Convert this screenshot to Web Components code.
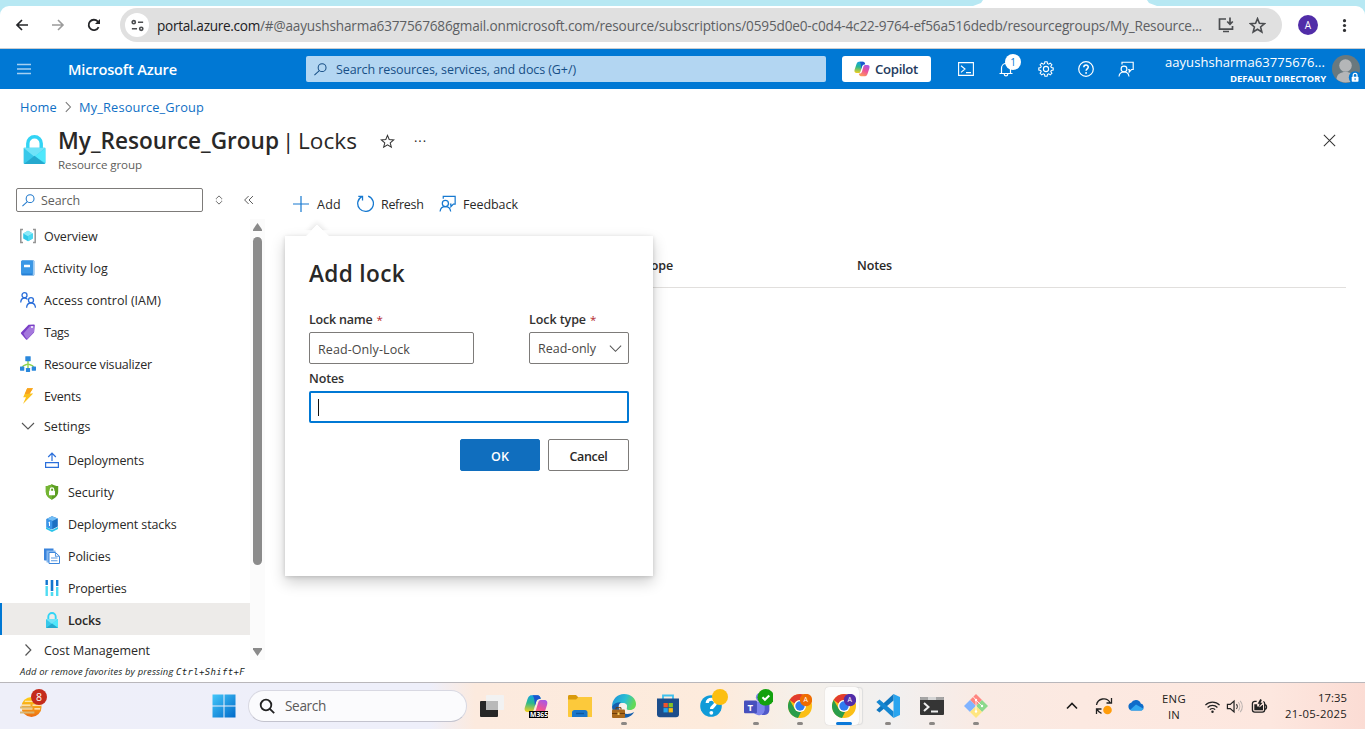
<!DOCTYPE html>
<html lang="en">
<head>
<meta charset="utf-8">
<title>My_Resource_Group - Locks</title>
<style>
html,body{margin:0;padding:0;height:729px;overflow:hidden;background:#fff}
body{font-family:"Open Sans","Noto Sans",sans-serif;font-size:12.5px;color:#292827}
</style>
</head>
<body>
<portal-screen></portal-screen>
<script>
const make=(name,css,html)=>{
  const t=document.createElement('template');
  t.innerHTML='<style>*{box-sizing:border-box}'+css+'</style>'+html;
  customElements.define(name,class extends HTMLElement{
    constructor(){super();this.attachShadow({mode:'open'}).append(t.content.cloneNode(true))}
  });
};

/* Single line of text tracked to an exact measure given by the w attribute; --dy drops its baseline. */
customElements.define('ui-text',class extends HTMLElement{
  constructor(){
    super();
    this.attachShadow({mode:'open'}).innerHTML='<style>:host{display:block;white-space:pre;flex:none;line-height:20px}span{display:inline-block;padding-top:var(--dy,1px);margin-bottom:calc(0px - var(--dy,1px));vertical-align:top}</style><span><slot></slot></span>';
  }
  connectedCallback(){
    const w=parseFloat(this.getAttribute('w'));
    if(!w)return;
    const s=this.shadowRoot.querySelector('span');
    const n=this.textContent.length;
    s.style.letterSpacing='0px';
    s.style.letterSpacing=((w-s.getBoundingClientRect().width)/n).toFixed(4)+'px';
    this.style.width=w+'px';
  }
});

const person='<circle cx="6" cy="8" r="2.9"/><path d="M1 15.500c.3-3 2.400-4.500 5-4.500s4.600 1.500 5 4.500M4 3.500V1.200h11.200v7.300h-1.700L11.200 11V8.500h-1"/>';
const lockArt='<path d="M4.300 7.500V4.700a3.700 3.700 0 0 1 7.400 0v2.800" fill="none" stroke="#32d4f5" stroke-width="1.900"/><rect x="2" y="7" width="12" height="9" rx=".5" fill="#37c8ea"/><path d="M2 7.200 8 12l6-4.800V7H2z" fill="#6fe3f8"/><path d="M14 7.300V15.500L8 11.800z" fill="#4fe8fc"/><path d="M2.200 16 8 11.500l5.800 4.500z" fill="#25a9ce"/>';
const chromeArt='<circle cx="12" cy="12" r="12" fill="#fbbf16"/><path d="M12 0a12 12 0 0 1 10.400 6H12a6 6 0 0 0-5.400 3.500L1.600 6A12 12 0 0 1 12 0z" fill="#e23b2e"/><path d="M1.600 6 7 15.200A6 6 0 0 0 13 18l-3 5.900A12 12 0 0 1 1.600 6z" fill="#2a9d4b"/><circle cx="12" cy="12" r="6" fill="#fff"/><circle cx="12" cy="12" r="4.700" fill="#2f7cf0"/>';
const copilot='<defs><linearGradient id="a" x1=".3" y1="0" x2=".2" y2="1"><stop offset="0" stop-color="#14a3e0"/><stop offset=".45" stop-color="#2bb98d"/><stop offset="1" stop-color="#f7cf1d"/></linearGradient><linearGradient id="b" x1=".8" y1="0" x2=".3" y2="1"><stop offset="0" stop-color="#a657e8"/><stop offset=".5" stop-color="#ee5396"/><stop offset="1" stop-color="#fd9a5b"/></linearGradient></defs><path d="M11.200 3.200C10.800 1.700 10.200.8 9 .8H5C3.300.8 2.700 2.300 2 4.500L.6 8.800c-.6 2 .2 3.200 2 3.200h2.200c1 0 1.500-.8 1.800-1.800l1.500-5c.4-1.300 1.100-2 3.100-2z" fill="url(#a)"/><path d="M4.800 12.800c.4 1.500 1 2.400 2.200 2.400h4c1.700 0 2.300-1.500 3-3.700l1.400-4.300c.6-2-.2-3.200-2-3.200h-2.200c-1 0-1.500.8-1.800 1.800l-1.500 5c-.4 1.300-1.100 2-3.100 2z" fill="url(#b)"/><path d="M5.500.8H9c1.200 0 1.800.9 2.200 2.400-1.700 0-2.600.6-3 1.800L7.300 8C7 4 6.700 1.500 5.500.8z" fill="#1c55cf"/>';
const ICONS={
back:[16,'<path d="M14 8H3M8 3 3 8l5 5" fill="none" stroke="currentColor" stroke-width="1.700"/>'],
fwd:[16,'<path d="M2 8h11M8 3l5 5-5 5" fill="none" stroke="currentColor" stroke-width="1.600"/>'],
reload:[16,'<path d="M12.600 10.200A5.200 5.200 0 1 1 11.700 4.400L13.500 6" fill="none" stroke="currentColor" stroke-width="1.800"/><path d="M14 2v5H9z" fill="currentColor"/>'],
tune:[16,'<g fill="none" stroke="currentColor" stroke-width="1.700"><circle cx="4" cy="4.500" r="1.700"/><path d="M8.500 4.500H14M2 11.500h5.500"/><circle cx="12" cy="11.500" r="1.700"/></g>'],
install:[18,'<path d="M9 3H2.500v10.200h13V10M6 15.500h6" fill="none" stroke="currentColor" stroke-width="1.700"/><path d="M13 1.500v6M10.200 5.500 13 8.200l2.800-2.700" fill="none" stroke="currentColor" stroke-width="1.700"/>'],
star:[16,'<path d="m8 1.500 1.800 4.400 4.800.4-3.700 3.100 1.200 4.700L8 11.500l-4.100 2.600 1.200-4.700L1.400 6.300l4.800-.4z" fill="none" stroke="currentColor" stroke-width="var(--sw,1.4)"/>'],
kebab:[16,'<g fill="currentColor"><circle cx="8" cy="2.800" r="1.700"/><circle cx="8" cy="8" r="1.700"/><circle cx="8" cy="13.200" r="1.700"/></g>'],
menu:[16,'<path d="M1 3.500h14M1 8h14M1 12.500h14" stroke="currentColor" stroke-width="1.300"/>'],
mag:[16,'<g fill="none" stroke="currentColor" stroke-width="1.100"><circle cx="9.700" cy="6" r="4.200"/><path d="M6.700 9.200 1.500 14"/></g>'],
magw:[16,'<g fill="none" stroke="currentColor" stroke-width="1.800"><circle cx="7" cy="7" r="5.300"/><path d="m10.800 10.800 4.400 4.400"/></g>'],
copilot:[16,copilot],
shell:[16,'<path d="M.6 1.600h14.800v12.800H.6zM3 4.800l4 3.200-4 3.300M8 11.600h5" fill="none" stroke="currentColor" stroke-width="1.100"/>'],
bell:[16,'<path d="M1.500 12.500h13M3.500 12.500V7a4.500 4.500 0 0 1 9 0v5.500M6.200 13c.2 2.600 3.400 2.600 3.600 0" fill="none" stroke="currentColor" stroke-width="1.200"/>'],
gear:[16,'<g fill="none" stroke="currentColor"><circle cx="8" cy="8" r="2.600" stroke-width="1.100"/><path d="M6.900.8h2.200l.4 1.900 1.200.5 1.600-1.100 1.600 1.600-1.100 1.600.5 1.200 1.900.4v2.200l-1.900.4-.5 1.200 1.100 1.600-1.600 1.600-1.600-1.100-1.200.5-.4 1.900H6.900l-.4-1.900-1.200-.5-1.600 1.100-1.600-1.600 1.100-1.600-.5-1.200L.8 9.100V6.900l1.900-.4.5-1.200-1.100-1.600 1.600-1.600 1.600 1.100 1.200-.5z" stroke-width="1.100"/></g>'],
help:[16,'<g fill="none" stroke="currentColor" stroke-width="1.200"><circle cx="8" cy="8" r="7.300"/><path d="M5.800 6.300c0-2.900 4.500-2.900 4.500-.2 0 1.700-2.200 1.900-2.200 3.700" stroke-width="1.500"/></g><circle cx="8.100" cy="11.900" r=".95" fill="currentColor"/>'],
feedback:[16,'<g fill="none" stroke="currentColor" stroke-width="1.150">'+person+'</g>'],
avatar:[28,'<circle cx="14" cy="14" r="14" fill="#69797e"/><circle cx="13.500" cy="10.500" r="6.300" fill="#b4b6b8"/><path d="M4.500 24c.5-5 4-7 9-7s8.500 2 9 7.500a14 14 0 0 1-18-.5z" fill="#b4b6b8"/><circle cx="23" cy="22.500" r="6.200" fill="#0078d4"/><rect x="19.700" y="21.800" width="6.800" height="5" rx=".7" fill="#fff"/><path d="M21.200 22v-1.700a1.900 1.900 0 0 1 3.800 0V22" fill="none" stroke="#fff" stroke-width="1.200"/><rect x="22.600" y="23.200" width="1" height="2" fill="#0078d4"/>'],
chevR:[16,'<path d="m5.500 2.500 5.300 5.500-5.300 5.500" fill="none" stroke="currentColor" stroke-width="1.200"/>'],
chevD:[16,'<path d="m2 5 6 6 6-6" fill="none" stroke="currentColor" stroke-width="1.100"/>'],
chevU:[16,'<path d="m3 10.500 5-5 5 5" fill="none" stroke="currentColor" stroke-width="1.600"/>'],
close:[16,'<path d="m2 2 12 12M14 2 2 14" stroke="currentColor" stroke-width="1.100"/>'],
updown:[16,'<path d="M4.500 6 8 2.500 11.500 6M4.500 10 8 13.500l3.500-3.500M4.500 6v1M11.500 6v1M4.500 10V9M11.500 10V9" fill="none" stroke="currentColor" stroke-width="1.300"/>'],
dbl:[16,'<path d="M7.500 3.500 3 8l4.500 4.500M12.500 3.500 8 8l4.500 4.500" fill="none" stroke="currentColor" stroke-width="1.100"/>'],
plus:[16,'<path d="M8 0v16M0 8h16" stroke="currentColor" stroke-width="1.200"/>'],
refresh:[16,'<path d="M10.500 1A7.400 7.400 0 1 1 4.500 1.500M1.200 1.300h4v3.900" fill="none" stroke="currentColor" stroke-width="1.200"/>'],
lock:[16,lockArt],
overview:[16,'<path d="M3 1.600H.8v12.800H3M13 1.600h2.200v12.800H13" fill="none" stroke="#949494" stroke-width="1.500"/><path d="m8 2.800 4.800 2.700v5L8 13.200l-4.800-2.700v-5z" fill="#32c8e8"/><path d="M8 2.800 12.800 5.500 8 8.200 3.200 5.500z" fill="#8be9f8"/><path d="M8 8.200v5l4.800-2.700v-5z" fill="#4bd9f2"/>'],
log:[16,'<path d="M2.500.4h11c.5 0 .8.300.8.800v13.600c0 .5-.3.800-.8.800h-11A1.300 1.300 0 0 1 1.200 14.300V1.700C1.200 1 1.700.4 2.500.4z" fill="#2680d6"/><path d="M12.700.4h.8c.5 0 .8.300.8.800v13.600c0 .5-.3.800-.8.800h-.8z" fill="#9ccaf2"/><path d="M2.500.4h10.200v13.200H2.500c-.5 0-1 .2-1.300.7V1.700C1.200 1 1.700.4 2.500.4z" fill="#3a97e6"/><rect x="4" y="4.700" width="6" height="2.600" rx=".3" fill="#fff"/>'],
people:[16,'<g fill="none" stroke="#2b6fda" stroke-width="1.300"><circle cx="4.500" cy="3.200" r="2.500"/><path d="M.7 10.500c.2-3 1.600-4.500 3.800-4.500 1.400 0 2.400.5 3 1.500"/><circle cx="11" cy="8.200" r="2.500"/><path d="M6.600 15.800c.2-3.300 1.800-4.800 4.400-4.800s4.200 1.500 4.500 4.800"/></g>'],
tag:[16,'<path d="M8.500.8 14 .4c.5 0 .8.400.8.800L14 8.500 7.300 15.400c-.4.400-.9.400-1.300 0L1.100 9.800c-.4-.4-.3-.9 0-1.200z" fill="#7a3fc6"/><path d="M10 2h4.200v5.800L7.300 15C6.200 14.200 4.500 12 3.500 9.500z" fill="#a478dc"/><circle cx="12" cy="3" r="1" fill="#fff"/>'],
viz:[16,'<path d="M8 5v7M8 7.500C8 9 3 8.500 2.500 11M8 7.500c0 1.500 5 1 5.500 3.500" fill="none" stroke="#92d34e" stroke-width="1.400"/><g fill="#2a88dc"><rect x="5.300" y=".2" width="5.400" height="5" rx=".4"/><rect x="0" y="10.500" width="4.300" height="4.200" rx=".4"/><rect x="5.900" y="12" width="4.200" height="4" rx=".4"/><rect x="11.700" y="10.500" width="4.300" height="4.200" rx=".4"/></g>'],
bolt:[16,'<path d="M7.200.2H13L9.700 5.500h3.500L3 16l3-6.800H3.200z" fill="#fbc21d"/><path d="M7.200.2H13L9.700 5.500 7 6 4.800 6z" fill="#f9a11e"/>'],
deploy:[16,'<path d="M1.600 10.600h12.800v4.800H1.600zM8 9V1.200M4.200 5 8 1l3.800 4" fill="none" stroke="#2a6fdb" stroke-width="1.200"/>'],
shield:[16,'<path d="M8 .2c2 1.400 4 1.700 6.200 1.700v5.600c0 4-2.900 6.500-6.200 8.300-3.300-1.800-6.200-4.300-6.200-8.300V1.900C4 1.900 6 1.600 8 .2z" fill="#5c9e22"/><path d="M8 .2v15.600C4.700 14 1.800 11.500 1.800 7.500V1.900C4 1.900 6 1.600 8 .2z" fill="#74b533"/><rect x="5" y="6.800" width="6" height="4.500" rx=".5" fill="#fff"/><path d="M6.300 7V5.500a1.700 1.700 0 0 1 3.400 0V7" fill="none" stroke="#fff" stroke-width="1.200"/>'],
stack:[16,'<path d="m2 11 6 3 6-3v2l-6 3-6-3z" fill="#2bc4ea"/><path d="M2.500 3 8 .2 13.800 2.500v8L8 13.500 2.500 11z" fill="#1b6fc2"/><path d="M2.500 3 8 .2l5.800 2.300L8.300 5z" fill="#71bdf6"/><path d="m2.500 3 5.800 2v8.300L2.500 11z" fill="#3a96ea"/><path d="M5.500 6v4M4.500 6.700l1-.7" stroke="#fff" stroke-width="1"/>'],
policy:[16,'<path d="M0 .5h9.500v3H3.500v9H.8C.3 12.500 0 12.200 0 11.700z" fill="#3a84dc"/><path d="M2.500 2.500h9v3h-6v9h-3z" fill="#83b7ef"/><path d="M5 4.500h6.500l4 3.800V15.500H5z" fill="#fff" stroke="#3c86db"/><path d="M11.500 4.500v3.800h4M7 10h6.500M7 12.700h6.500" fill="none" stroke="#5b9ae2" stroke-width="1.100"/>'],
props:[16,'<g><rect x="1.500" y="0" width="2.400" height="5" fill="#1276cf"/><rect x="1.500" y="6" width="2.400" height="10" fill="#50dcf2"/><rect x="6.700" y="0" width="2.600" height="11" fill="#1276cf"/><rect x="6.700" y="12" width="2.600" height="4" fill="#50dcf2"/><rect x="12" y="0" width="2.400" height="6" fill="#1276cf"/><rect x="12" y="7" width="2.400" height="9" fill="#50dcf2"/></g>'],
widget:[24,'<defs><linearGradient id="a" x2="0" y2="1"><stop stop-color="#ffd21a"/><stop offset="1" stop-color="#ec6b12"/></linearGradient></defs><circle cx="12" cy="12.500" r="10.500" fill="url(#a)"/><path d="M2 10.500h9m2 0h9M1 14.500h12m2 0h6M5 6.500h9" stroke="#fff3d5" stroke-width="1.200"/><path d="M0 13h13M0 18.200h15" stroke="#d9b774" stroke-width="2"/>'],
win:[24,'<defs><linearGradient id="a" gradientUnits="userSpaceOnUse" x1="0" y1="0" x2="24" y2="24"><stop stop-color="#45c9fb"/><stop offset="1" stop-color="#0068c8"/></linearGradient></defs><path d="M.5.500h11v11H.5zM12.500.500h11v11h-11zM.5 12.500h11v11H.5zM12.500 12.500h11v11h-11z" fill="url(#a)"/>'],
task:[24,'<rect x="0" y="7" width="18" height="16" rx="1" fill="#272727"/><rect x="6" y="1" width="18" height="15" rx="1" fill="#f2f2f2"/><path d="M6 7h12v9H6z" fill="#b9b9b9"/>'],
m365:[24,'<g transform="scale(1.5)">'+copilot+'</g>'],
folder:[24,'<path d="M0 2.500C0 1.500.5 1 1.500 1H8l2.500 2.500V6H0z" fill="#d99a0c"/><path d="M0 5.500h8l2.500-2.500H24v20H1c-.6 0-1-.4-1-1z" fill="#fcc93b"/><path d="M4 23v-4.500c0-1.500 1-2.500 2.500-2.500h10.500c1.500 0 2.500 1 2.500 2.500V23z" fill="#1a76c9"/><path d="M8 19.500h8" stroke="#0d57a0" stroke-width="1.400"/>'],
edge:[24,'<defs><linearGradient id="a" x2="1" y2=".3"><stop stop-color="#1c8fdc"/><stop offset=".6" stop-color="#2bbfd2"/><stop offset="1" stop-color="#63d957"/></linearGradient></defs><path d="M12 0c7 0 12 4.700 12 10 0 3.800-2.700 6-6 6-2.600 0-4-.9-3.300-2.300C16 10.500 13.500 9 10 9 5 9 1 12 .1 14 -.6 6 5 0 12 0z" fill="url(#a)"/><path d="M.1 13C1.500 9.500 5 8.300 9 8.300c-3 2-3 6.500-.5 9.200 3 3.200 9.500 3.200 13.700.5C18.500 25 8 26 3 19.500.8 17 0 15 .1 13z" fill="#145ead"/><path d="M10 9c-2.500 3-1.500 8 4 9.200 3 .7 6 .4 8.500-.9-4 1.700-9 .5-7.800-3.600C15.800 11 13.500 9 10 9z" fill="#f7f3ee"/><rect x="0" y="15.500" width="13" height="8.500" rx="1" fill="#a9681c"/><path d="M4 15.500v-1.800h5v1.800M0 19.500h13" fill="none" stroke="#6c3c0a" stroke-width="1"/><rect x="5.500" y="18.500" width="2" height="2.500" fill="#f9cf64"/>'],
store:[24,'<path d="M7 5V1.500h10V5" fill="none" stroke="#3fc1ee" stroke-width="1.800"/><path d="M1 4.500h22v15.700a3 3 0 0 1-3 3H4a3 3 0 0 1-3-3z" fill="#1c4e8c"/><path d="M7.500 9h4.300v4.300H7.500z" fill="#f0532b"/><path d="M12.600 9h4.300v4.300h-4.300z" fill="#84c225"/><path d="M7.500 14.100h4.300v4.300H7.500z" fill="#22a6ec"/><path d="M12.600 14.100h4.300v4.300h-4.300z" fill="#fdbb12"/>'],
qm:[28,'<circle cx="11" cy="17" r="10.800" fill="#109bd8"/><path d="M7.200 14c0-5 8.300-5 8.300 0 0 3-4 3.200-4 6" fill="none" stroke="#fff" stroke-width="3.200"/><circle cx="11.300" cy="23.800" r="1.900" fill="#fff"/><circle cx="20" cy="8" r="8" fill="#fcbf10"/>'],
teams:[28,'<circle cx="16" cy="8" r="4.500" fill="#7b83eb"/><path d="M17 12h7.500v8c0 3-2 5-4.500 5h-3z" fill="#5059c9"/><path d="M9 12h11v8.500a6 6 0 0 1-11 2z" fill="#7b83eb"/><rect x="0" y="11" width="12.500" height="12.500" rx="1" fill="#4750bd"/><circle cx="21" cy="8" r="8" fill="#13a10e"/><path d="m17.800 8 2.400 2.400 4.200-4.200" fill="none" stroke="#fff" stroke-width="2"/>'],
chromeO:[24,chromeArt+'<circle cx="18" cy="6" r="6.200" fill="#ef6c00"/>'],
chromeP:[24,chromeArt+'<circle cx="18" cy="6" r="6.200" fill="#512da8"/>'],
vscode:[24,'<path d="M17.500 0 24 3v18l-6.500 3z" fill="#2aa5ef"/><path d="M17.500 0v6.500L3.500 18.500.3 16z" fill="#0f76bf"/><path d="M17.500 24v-6.500L3.500 5.500.3 8z" fill="#1587d2"/>'],
term:[24,'<rect y="3" width="24" height="18" rx="1" fill="#353535"/><path d="M0 6V4c0-.6.400-1 1-1h22c.6 0 1 .4 1 1v2z" fill="#a5a5a5"/><path d="M8 3h8v3H8z" fill="#d5d5d5"/><path d="m4 9 4.500 4L4 17M11 17.500h7" fill="none" stroke="#eee" stroke-width="2"/>'],
git:[24,'<path d="M12 0 18 6l-6 6-6-6z" fill="#ff8580"/><path d="m6 6 6 6-6 6-6-6z" fill="#80b3ff"/><path d="m18 6 6 6-6 6-6-6z" fill="#8cd98c"/><path d="m12 12 6 6-6 6-6-6z" fill="#ffe680"/><path d="M9 2.500 12 6v12M12 6l6 6" fill="none" stroke="#fff" stroke-width=".8"/><circle cx="12" cy="6" r="1.200" fill="#fff"/><circle cx="12" cy="17.500" r="1.200" fill="#fff"/><circle cx="18" cy="12" r="1.200" fill="#fff"/>'],
sync:[18,'<path d="M1.500 8A7.300 7.300 0 0 1 15 5.500M16.500 1v5h-5M6.500 16.300A7 7 0 0 1 2 12M1.500 17v-5h5" fill="none" stroke="#222" stroke-width="1.300"/><circle cx="12.500" cy="13" r="4.300" fill="#ff9c0a"/>'],
cloud:[18,'<path d="M4.500 13.500a4 4 0 0 1-.3-7.700 5.300 5.300 0 0 1 9.600.7 3.700 3.700 0 0 1 .7 7z" fill="#0f6cc9"/><path d="m3 13 6-5.500 7.500 4.200c-.4 1.200-1.400 1.800-2.500 1.800H4.500z" fill="#32a9f0"/>'],
wifi:[18,'<g fill="none" stroke="#222" stroke-width="1.300"><path d="M1.500 7.500a10.500 10.500 0 0 1 15 0M3.800 10a7.300 7.300 0 0 1 10.400 0M6.200 12.300a4 4 0 0 1 5.600 0"/></g><circle cx="9" cy="14.500" r="1.300" fill="#222"/>'],
sound:[18,'<path d="M1.500 6.800h3L8.500 3.300v11.400L4.500 11.200h-3z" fill="none" stroke="#222" stroke-width="1.300"/><path d="M11 6.500a4 4 0 0 1 0 5" fill="none" stroke="#444" stroke-width="1.200"/><path d="M13 4.500a7 7 0 0 1 0 9M15 3a9 9 0 0 1 0 12" fill="none" stroke="#bbb3b0" stroke-width="1.100"/>'],
batt:[18,'<path d="M6 3.500H4A2.500 2.500 0 0 0 1.500 6v6.500A2.500 2.500 0 0 0 4 15h8a2.500 2.500 0 0 0 2.500-2.500V6A2.500 2.500 0 0 0 13 3.700M15 7c2 .5 2 4.500 0 5" fill="none" stroke="#222" stroke-width="1.400"/><path d="M3.500 6.500h3V9h2.500v1l3-2.500h.7V13H3.500z" fill="#222"/><path d="M9.800 1 7 6h2l-.7 3.500L12.300 5h-2.200l1.400-3z" fill="#222"/>']
};
customElements.define('ui-icon',class extends HTMLElement{
  constructor(){super();this.attachShadow({mode:'open'})}
  connectedCallback(){
    const [v,a]=ICONS[this.getAttribute('name')],s=this.getAttribute('size')||16;
    this.shadowRoot.innerHTML='<style>:host{display:block;flex:none;width:'+s+'px;height:'+s+'px}svg{display:block}</style><svg width="'+s+'" height="'+s+'" viewBox="0 0 '+v+' '+v+'">'+a+'</svg>';
  }
});

/* Browser address bar */
make('browser-bar',`
:host{display:block;height:49px;background:#b7e8f3;border-bottom:1px solid #c9ccd0}
.strip{height:6px;margin-left:973px;width:184px;background:#fff;clip-path:polygon(10px 0,174px 0,176px 1px,184px 2px,184px 6px,0 6px,0 2px,8px 1px)}
.strip{clip-path:polygon(10px 0,174px 0,177px 1px,184px 2px,0 2px,7px 1px)}
.bar{height:42px;background:#fff;border-radius:9px 9px 0 0;display:flex;align-items:center;padding:0 13px 4px 14px}
.strip{height:2px}
.bar{margin-top:4px}
.nav{display:flex;gap:20px;color:#252629;width:106px}
.nav ui-icon:nth-child(2){color:#9b9b9b}
.pill{flex:none;width:1162px;height:34px;border-radius:17px;background:#e0e0e0;display:flex;align-items:center;padding:0 16px 0 5px;font-size:13.600px;color:#5d5f63}
.tune{width:24px;height:24px;border-radius:50%;background:#fff;display:grid;place-items:center;margin-right:8px;color:#303134}
.host{color:#202124}
.pill ui-icon{color:#4b4d50}
.a{width:20px;height:20px;border-radius:50%;background:#512da8;color:#fff;display:grid;place-items:center;font-size:10px;margin:0 19px 0 16px;flex:none}
.strip,.bar{margin-top:0}
.strip{height:6px;clip-path:polygon(10px 0,174px 0,176px 3px,184px 6px,0 6px,8px 3px)}
`,`<div class="strip"></div><div class="bar"><div class="nav"><ui-icon name="back"></ui-icon><ui-icon name="fwd"></ui-icon><ui-icon name="reload"></ui-icon></div>
<div class="pill"><div class="tune"><ui-icon name="tune" size="15"></ui-icon></div><ui-text class="host" w="103">portal.azure.com</ui-text><ui-text w="942">/#@aayushsharma6377567686gmail.onmicrosoft.com/resource/subscriptions/0595d0e0-c0d4-4c22-9764-ef56a516dedb/resourcegroups/My_Resource...</ui-text><ui-icon name="install" size="18" style="margin-left:15px"></ui-icon><ui-icon name="star" size="17" style="margin-left:14px;--sw:1.5"></ui-icon></div>
<div class="a">A</div><ui-icon name="kebab" size="15" style="color:#303134"></ui-icon></div>`);

/* Azure global header */
make('azure-header',`
:host{display:flex;align-items:center;height:40px;background:#0078d4;color:#fff;padding-left:16px}
.brand{font-weight:600;font-size:14.600px;margin:0 129px 0 36px;--dy:0px}
.search{width:520px;height:26px;background:#b3d6f2;border-radius:2px;color:#174f86;display:flex;align-items:center;padding-left:7px;gap:8px;flex:none}
.cp{width:89px;height:26px;background:#fff;border-radius:3px;color:#243a5e;font-weight:600;font-size:13.200px;display:flex;align-items:center;padding-left:12px;gap:5px;margin:0 27px 0 16px;flex:none;--dy:0px}
.tools{display:flex;gap:24px;position:relative;flex:none}
.n{position:absolute;left:47px;top:-7px;width:16px;height:16px;border-radius:50%;background:#fff;color:#0078d4;font-size:10px;line-height:16px;text-align:center}
.who{width:162px;display:flex;flex-direction:column;align-items:flex-end;margin:1px 6px 0 30px;flex:none}
.who ui-text{line-height:16px}
.dir{font-size:9.600px;font-weight:700}
`,`<ui-icon name="menu" style="color:#a6d0f1"></ui-icon><ui-text class="brand" w="109">Microsoft Azure</ui-text>
<div class="search"><ui-icon name="mag" size="15" style="color:#174f86"></ui-icon><ui-text w="240">Search resources, services, and docs (G+/)</ui-text></div>
<div class="cp"><ui-icon name="copilot"></ui-icon><ui-text w="43">Copilot</ui-text></div>
<div class="tools"><ui-icon name="shell"></ui-icon><ui-icon name="bell"></ui-icon><ui-icon name="gear"></ui-icon><ui-icon name="help"></ui-icon><ui-icon name="feedback"></ui-icon><span class="n">1</span></div>
<div class="who"><ui-text w="160" style="font-size:13px;margin-right:1px">aayushsharma63775676...</ui-text><ui-text class="dir" w="96" style="padding-top:1px">DEFAULT DIRECTORY</ui-text></div><ui-icon name="avatar" size="28"></ui-icon>`);

/* Breadcrumb and blade title */
make('blade-head',`
:host{display:block;height:99px;--dy:0px}
.crumb{display:flex;align-items:center;gap:4px;padding-left:20px;height:36px;color:#0f6fc5;font-size:12.800px}
.row{display:flex;align-items:flex-start;padding:3px 28px 0 20px}
h1{margin:0;font-size:22.600px;font-weight:600;display:flex;line-height:26px}
h1 ui-text{line-height:26px}
.light{font-weight:400;margin-left:3px;width:16px}
.sub{font-size:11.600px;color:#605e5c;line-height:16px;margin-top:3px}
.x{margin-left:auto;margin-top:5px}
`,`<div class="crumb"><ui-text w="37">Home</ui-text><ui-icon name="chevR" size="14" style="color:#777"></ui-icon><ui-text w="125">My_Resource_Group</ui-text></div>
<div class="row"><ui-icon name="lock" size="29" style="margin:7px 9px 0 0"></ui-icon><div><h1><ui-text w="221">My_Resource_Group</ui-text><ui-text class="light">|</ui-text><ui-text style="font-weight:400" w="59">Locks</ui-text></h1><ui-text class="sub" w="84">Resource group</ui-text></div>
<ui-icon name="star" size="15" style="margin:6px 0 0 23px;--sw:1.1;color:#333"></ui-icon><ui-text style="margin:1px 0 0 19px;font-size:13px;line-height:24px" w="13">···</ui-text><ui-icon class="x" name="close" size="15" style="color:#333"></ui-icon></div>`);

make('nav-item',`
:host{display:flex;align-items:center;height:32px;padding:2px 0 0 20px;gap:8px;flex:none}
:host([sub]){padding-left:44px}
:host([group]){padding-top:0;padding-bottom:2px}
:host([active]){background:#edebe9;border-left:2px solid #0078d4;padding-left:42px;font-weight:600}
`,`<slot name="icon"></slot><slot></slot>`);

make('side-nav',`
:host{display:flex;flex-direction:column;width:265px;height:494px;flex:none}
.find{display:flex;align-items:center;height:24px}
.box{width:187px;height:24px;border:1px solid #7d7b79;border-radius:2px;margin-left:16px;display:flex;align-items:center;padding-left:4px;gap:5px;color:#605e5c}
.body{display:flex;height:441px;margin-top:7px;overflow:hidden;flex:none}
.list{width:250px;display:flex;flex-direction:column}
.sb{width:15px;background:#fbfbfb;display:flex;flex-direction:column;align-items:center;padding:4px 0}
.up,.dn{width:9px;height:8px;background:#898989;clip-path:polygon(50% 0,100% 80%,100% 100%,0 100%,0 80%);flex:none}
.dn{transform:rotate(180deg);margin-top:auto}
.th{width:9px;height:328px;border-radius:5px;background:#8b8b8b;margin-top:6px}
.hint{font-size:9.400px;font-style:italic;padding-left:20px;display:flex;align-items:center;height:22px;color:#201f1e}
.kbd{font-family:"DejaVu Sans Mono","Liberation Mono",monospace;font-size:9px}
`,`<div class="find"><div class="box"><ui-icon name="mag" size="15" style="color:#1f78cc"></ui-icon><ui-text w="39">Search</ui-text></div><ui-icon name="updown" size="12" style="margin-left:10px;color:#666"></ui-icon><ui-icon name="dbl" size="14" style="margin-left:17px;color:#555"></ui-icon></div>
<div class="body"><div class="list">
<nav-item><ui-icon slot="icon" name="overview"></ui-icon><ui-text w="53.500">Overview</ui-text></nav-item>
<nav-item><ui-icon slot="icon" name="log"></ui-icon><ui-text w="64">Activity log</ui-text></nav-item>
<nav-item><ui-icon slot="icon" name="people"></ui-icon><ui-text w="117">Access control (IAM)</ui-text></nav-item>
<nav-item><ui-icon slot="icon" name="tag"></ui-icon><ui-text w="25">Tags</ui-text></nav-item>
<nav-item><ui-icon slot="icon" name="viz"></ui-icon><ui-text w="108">Resource visualizer</ui-text></nav-item>
<nav-item><ui-icon slot="icon" name="bolt"></ui-icon><ui-text w="37">Events</ui-text></nav-item>
<nav-item group><ui-icon slot="icon" name="chevD" style="color:#555"></ui-icon><ui-text w="46.500">Settings</ui-text></nav-item>
<nav-item sub><ui-icon slot="icon" name="deploy"></ui-icon><ui-text w="76">Deployments</ui-text></nav-item>
<nav-item sub><ui-icon slot="icon" name="shield"></ui-icon><ui-text w="46">Security</ui-text></nav-item>
<nav-item sub><ui-icon slot="icon" name="stack"></ui-icon><ui-text w="108.500">Deployment stacks</ui-text></nav-item>
<nav-item sub><ui-icon slot="icon" name="policy"></ui-icon><ui-text w="42.500">Policies</ui-text></nav-item>
<nav-item sub><ui-icon slot="icon" name="props"></ui-icon><ui-text w="58.500">Properties</ui-text></nav-item>
<nav-item sub active><ui-icon slot="icon" name="lock"></ui-icon><ui-text w="33">Locks</ui-text></nav-item>
<nav-item group><ui-icon slot="icon" name="chevR" style="color:#555"></ui-icon><ui-text w="106">Cost Management</ui-text></nav-item>
</div><div class="sb"><i class="up"></i><i class="th"></i><i class="dn"></i></div></div>
<div class="hint"><ui-text w="156">Add or remove favorites by pressing </ui-text><ui-text class="kbd" w="69">Ctrl+Shift+F</ui-text></div>`);

make('form-field',`
:host{display:flex;flex-direction:column}
.l{display:flex;font-weight:600;height:20px;margin-bottom:3px;color:#323130}
.b{height:32px;border:1px solid #7d7b79;border-radius:2px;display:flex;align-items:center;padding:0 5px 0 8px;color:#494745}
:host([focused]) .b{border:2px solid #0078d4;padding-left:7px}
`,`<div class="l"><slot name="label"></slot></div><div class="b"><slot></slot></div>`);

make('add-lock',`
:host{display:block;position:absolute;left:20px;top:48px;width:368px;height:340px;background:#fff;box-shadow:0 6px 14px rgba(0,0,0,.2),0 1px 4px rgba(0,0,0,.14);padding:24px}
:host::before{content:"";position:absolute;left:21px;top:-11px;width:23px;height:11px;background:#fff;clip-path:polygon(50% 0,100% 100%,0 100%);}
.sh{position:absolute;left:24px;top:-8px;width:16px;height:16px;transform:rotate(45deg);box-shadow:-2px -2px 5px rgba(0,0,0,.09);clip-path:polygon(-10px -10px,18px -10px,-10px 18px)}
h2{margin:0 0 36px;font-size:22.600px;font-weight:600;line-height:28px;height:28px;color:#292827;--dy:0px}
h2 ui-text{line-height:28px}
.two{display:flex;justify-content:space-between;margin-top:-15px}
.r{color:#b4262c;margin-left:4px;font-weight:400;font-size:11.500px;line-height:20px;padding-top:1px}
.c{width:1px;height:17px;background:#111}
.btns{display:flex;justify-content:flex-end;gap:8px;margin-top:16px;font-weight:600}
.btn{width:81px;height:32px;border:1px solid #7d7b79;border-radius:2px;display:grid;place-items:center;padding-top:2px}
.ok{width:80px;background:#106ebe;border-color:#106ebe;color:#fff}
.notes{margin-top:4px}
`,`<i class="sh"></i><h2><ui-text w="96">Add lock</ui-text></h2>
<div class="two"><form-field style="width:165px"><ui-text slot="label" w="63.500">Lock name</ui-text><span slot="label" class="r">*</span><ui-text w="92" style="padding-top:2px">Read-Only-Lock</ui-text></form-field>
<form-field style="width:100px"><ui-text slot="label" w="57">Lock type</ui-text><span slot="label" class="r">*</span><ui-text w="58">Read-only</ui-text><ui-icon name="chevD" size="15" style="margin-left:auto;color:#555"></ui-icon></form-field></div>
<form-field class="notes" focused><ui-text slot="label" w="35">Notes</ui-text><i class="c"></i></form-field>
<div class="btns"><div class="btn ok"><ui-text w="18">OK</ui-text></div><div class="btn"><ui-text w="38">Cancel</ui-text></div></div>`);

make('locks-view',`
:host{display:block;position:relative;flex:1;height:494px}
.cmds{display:flex;align-items:center;height:32px;padding-left:28px;gap:8px}
.cmds ui-icon{margin-top:-1px;color:#1779d0}
.th{display:grid;grid-template-columns:353px 219px 1fr;height:44px;margin:24px 19px 0 20px;border-bottom:1px solid #e1dfdd;align-items:center;font-weight:600;--dy:0px}
`,`<div class="cmds"><ui-icon name="plus"></ui-icon><ui-text w="24">Add</ui-text><ui-icon name="refresh" size="17" style="margin-left:8px"></ui-icon><ui-text w="42.500" style="margin-left:-1px">Refresh</ui-text><ui-icon name="feedback" size="17" style="margin-left:7.500px"></ui-icon><ui-text w="55" style="margin-left:-1px">Feedback</ui-text></div>
<div class="th"><span></span><ui-text w="35">Scope</ui-text><ui-text w="35">Notes</ui-text></div>
<add-lock></add-lock>`);

make('task-slot',`
:host{display:flex;width:44px;height:46px;flex:none;align-items:center;justify-content:center;position:relative}
:host([run])::after{content:"";position:absolute;bottom:4px;left:19px;width:6px;height:3px;border-radius:2px;background:#8b8784}
:host([on])::after{left:14px;width:16px;background:#0b78d8}
:host([on])::before{content:"";position:absolute;left:3px;top:4px;width:34px;height:38px;border-radius:4px;background:#fdfcfb;box-shadow:0 0 1px #bbb,4px 0 0 -1px #f7f4f1,4px 0 1px 0 #ddd}
::slotted(ui-icon){position:relative}
`,`<slot></slot>`);

make('task-bar',`
:host{display:flex;align-items:center;height:47px;border-top:1px solid #b9b7bb;background:linear-gradient(90deg,#eeeff9 0,#eeeffa 430px,#fceade 475px,#fdebdc 720px,#f5f0ea 800px,#f1f0f0 890px,#faeae3 985px,#fce9e1 1080px,#fde7df 1270px,#fbdcd4 1365px);color:#1d1b1a;--dy:0px}
.w{width:202px;padding-left:20px;position:relative;flex:none}
.b{position:absolute;left:31px;top:-6px;width:16px;height:16px;border-radius:50%;background:#c42b1c;color:#fff;font-size:10.500px;line-height:16px;text-align:center}
.s{width:219px;height:32px;border-radius:16px;background:#fbfbfd;border:1px solid #d8d8e2;border-bottom-color:#c3c3ce;margin:0 2px 0 3px;display:flex;align-items:center;padding-left:10px;gap:10px;color:#5c5a5a;font-size:13.600px;flex:none}
.t{position:absolute;z-index:1;color:#fff;line-height:1;font-weight:700}
.tray{display:flex;align-items:center;margin-left:66px;flex:none}
.lang{width:30px;display:flex;flex-direction:column;align-items:center;margin:0 15px 0 14px;font-size:11.300px;--dy:1px}
.lang ui-text,.clock ui-text{line-height:16px}
.clock{width:64px;display:flex;flex-direction:column;align-items:flex-end;font-size:11.300px;margin-left:15px}
`,`<div class="w"><ui-icon name="widget" size="23"></ui-icon><span class="b">8</span></div>
<task-slot style="width:43px"><ui-icon name="win" size="24"></ui-icon></task-slot>
<div class="s"><ui-icon name="magw" size="16" style="color:#222"></ui-icon><ui-text w="41">Search</ui-text></div>
<task-slot style="width:45px"><ui-icon name="task" size="24"></ui-icon></task-slot>
<task-slot><ui-icon name="m365" size="24"></ui-icon><span class="t" style="font-size:6.800px;left:15px;top:28px;background:#000;padding:0 1px;width:19px;height:7px;line-height:7px">M365</span></task-slot>
<task-slot><ui-icon name="folder" size="24"></ui-icon></task-slot>
<task-slot run><ui-icon name="edge" size="24"></ui-icon></task-slot>
<task-slot><ui-icon name="store" size="24"></ui-icon></task-slot>
<task-slot><ui-icon name="qm" size="28" style="margin:-6px 0 0 4px"></ui-icon></task-slot>
<task-slot run><ui-icon name="teams" size="29" style="margin:-5px 0 0 4px"></ui-icon><span class="t" style="font-size:9.500px;left:13.500px;top:20px">T</span></task-slot>
<task-slot run><ui-icon name="chromeO" size="24"></ui-icon><span class="t" style="font-size:7px;left:25.500px;top:13px;font-weight:400">A</span></task-slot>
<task-slot run on><ui-icon name="chromeP" size="24"></ui-icon><span class="t" style="font-size:7px;left:25.500px;top:13px;font-weight:400">A</span></task-slot>
<task-slot run><ui-icon name="vscode" size="24"></ui-icon></task-slot>
<task-slot run><ui-icon name="term" size="24"></ui-icon></task-slot>
<task-slot run><ui-icon name="git" size="24"></ui-icon></task-slot>
<div class="tray"><ui-icon name="chevU" size="16"></ui-icon><ui-icon name="sync" size="18" style="margin-left:15px"></ui-icon><ui-icon name="cloud" size="18" style="margin-left:14px"></ui-icon>
<div class="lang"><ui-text w="24">ENG</ui-text><ui-text w="12">IN</ui-text></div><ui-icon name="wifi" size="17"></ui-icon><ui-icon name="sound" size="17" style="margin-left:5px"></ui-icon><ui-icon name="batt" size="17" style="margin-left:8px"></ui-icon>
<div class="clock"><ui-text w="29">17:35</ui-text><ui-text w="62">21-05-2025</ui-text></div></div>`);

make('portal-screen',`
:host{display:flex;flex-direction:column;width:1365px;height:729px;overflow:hidden;background:#fff}
main{display:flex;height:494px;flex:none}
`,`<browser-bar></browser-bar><azure-header></azure-header><blade-head></blade-head><main><side-nav></side-nav><locks-view></locks-view></main><task-bar></task-bar>`);
</script>
</body>
</html>
